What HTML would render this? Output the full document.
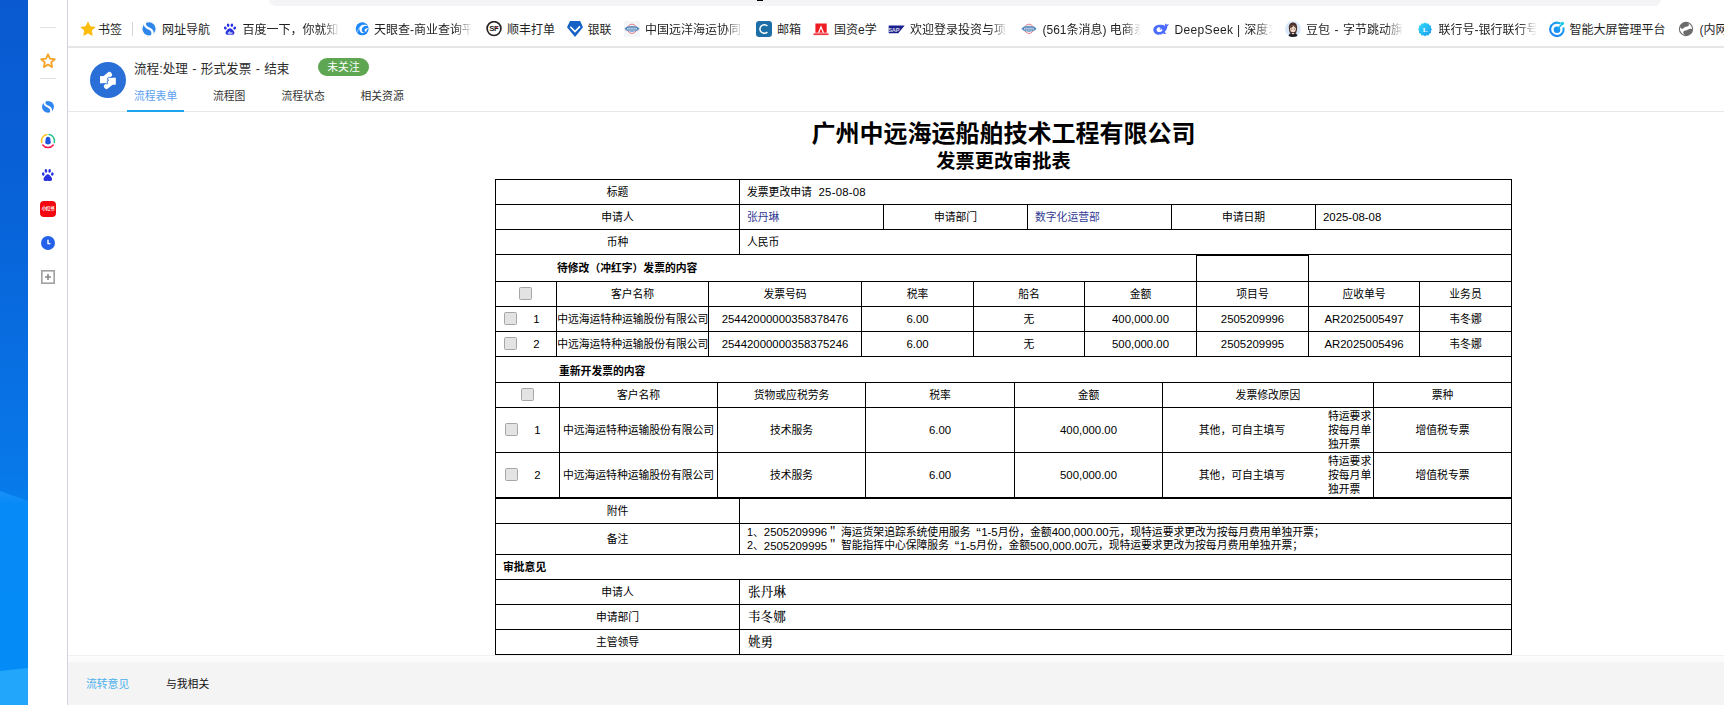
<!DOCTYPE html>
<html lang="zh-CN"><head><meta charset="utf-8"><title>流程:处理 - 形式发票 - 结束</title>
<style>
*{box-sizing:border-box;margin:0;padding:0}
html,body{width:1724px;height:705px;overflow:hidden;background:#fff}
body{position:relative;font-family:"Liberation Sans","Noto Sans CJK SC",sans-serif;color:#000;font-size:10.8px}
.abs{position:absolute}
.t{position:absolute;white-space:nowrap;line-height:1}
.c{position:absolute;padding-top:1.5px;display:flex;align-items:center;justify-content:center;white-space:nowrap;line-height:1}
.l{position:absolute;padding-top:1.5px;display:flex;align-items:center;justify-content:flex-start;white-space:nowrap;line-height:1}
.ln{position:absolute;background:#000}
.cb{position:absolute;width:13px;height:13px;border:1px solid #a6a6a6;border-radius:1.5px;background:#e3e3e3}
.bm{position:absolute;top:23px;height:15px;font-size:12px;line-height:15px;color:#1f1f1f;white-space:nowrap;overflow:hidden}
.bm.f{-webkit-mask-image:linear-gradient(90deg,#000 0,#000 82%,transparent 100%);mask-image:linear-gradient(90deg,#000 0,#000 82%,transparent 100%)}
.ic{position:absolute;top:21px;width:16px;height:16px}
.num{font-size:11.4px;position:relative;top:.4px}
.lnk{color:#333b94}
.b{font-weight:bold}
.q{margin-left:5.8px;margin-right:.4px;font-size:13.5px;line-height:0;position:relative;top:1px}
.sf{font-family:"Liberation Serif","Noto Serif CJK SC",serif;font-size:12.6px;font-weight:500}
</style></head>
<body>
<svg class="abs" id="desk" style="left:0;top:0" width="28" height="705" viewBox="0 0 28 705" preserveAspectRatio="none">
<defs><linearGradient id="dg" x1="0" y1="0" x2="0" y2="1"><stop offset="0" stop-color="#0a59d0"/><stop offset=".33" stop-color="#0864da"/><stop offset=".67" stop-color="#0878e8"/><stop offset=".72" stop-color="#067eec"/><stop offset="1" stop-color="#067eec"/></linearGradient>
<linearGradient id="dg2" x1="0" y1="0" x2="0" y2="1"><stop offset="0" stop-color="#1a92fa"/><stop offset=".06" stop-color="#068af7"/><stop offset="1" stop-color="#048cf6"/></linearGradient></defs>
<rect width="28" height="705" fill="url(#dg)"/>
<path d="M0 491L28 501V705H0z" fill="url(#dg2)"/>
<path d="M0 671L28 668V705H0z" fill="#22a6fc"/>
</svg>
<div class="abs" id="side" style="left:28px;top:0;width:40px;height:705px;background:#fff;border-right:1px solid #cfd2e3"></div>
<div class="abs" style="left:40px;top:27px;width:16px;height:1px;background:#e3e3e3"></div>
<div class="abs" style="left:40px;top:78px;width:16px;height:1px;background:#e3e3e3"></div>
<svg class="abs" style="left:39px;top:52px" width="18" height="17" viewBox="0 0 18 17"><path d="M9 2.300l2 4.300 4.700.6-3.500 3.200.9 4.600L9 12.700 4.900 15l.9-4.600L2.300 7.200 7 6.600z" fill="none" stroke="#f5a52b" stroke-width="1.900" stroke-linejoin="round"/></svg>
<svg class="abs" style="left:41px;top:99.500px" width="14" height="14" viewBox="0 0 16 16"><circle cx="8" cy="8" r="7.800" fill="#fff"/><circle cx="8" cy="7.800" r="6.800" fill="#2f86f0"/><path d="M4 1.800C2.900 5.300 5.800 6.500 8.400 7.700c2.600 1.200 3.800 3.100 2.900 6.300" fill="none" stroke="#fff" stroke-width="2.300" stroke-linecap="round"/></svg>
<svg class="abs" style="left:39px;top:132px" width="18" height="18" viewBox="-9 -9 18 18">
<path d="M1.100 -6.400A6.500 6.500 0 0 1 6.300 1.600" fill="none" stroke="#22c08a" stroke-width="1.500" stroke-linecap="round"/>
<path d="M5.200 4A6.500 6.500 0 0 1 -5.200 4" fill="none" stroke="#f2164c" stroke-width="1.500" stroke-linecap="round"/>
<path d="M-6.300 1.600A6.500 6.500 0 0 1 -1.100 -6.400" fill="none" stroke="#fcc419" stroke-width="1.500" stroke-linecap="round"/>
<path d="M0 -4.300c-1.500 0-2.400 1.200-2.400 2.700 0 .7-.1 1.400-.3 2.100-.3 1 .1 2.100.9 2.600.5.300 1.100.5 1.800.5s1.300-.2 1.800-.5c.8-.5 1.200-1.600.9-2.600-.2-.7-.3-1.400-.3-2.100C2.400 -3.100 1.500 -4.300 0 -4.300z" fill="#1d55e0"/></svg>
<svg class="abs" style="left:41.200px;top:167.800px" width="13.600" height="14" viewBox="0 0 20 19" fill="#2a32e0" preserveAspectRatio="none"><ellipse cx="3.300" cy="8.200" rx="1.900" ry="2.300" transform="rotate(-20 3.300 8.200)"/><ellipse cx="7.300" cy="4" rx="1.900" ry="2.500" transform="rotate(-6 7.300 4)"/><ellipse cx="12.700" cy="4" rx="1.900" ry="2.500" transform="rotate(6 12.700 4)"/><ellipse cx="16.700" cy="8.200" rx="1.900" ry="2.300" transform="rotate(20 16.700 8.200)"/><path d="M10 8.400c2.400 0 3.600 2.100 5.300 4 1.700 1.800 1.300 4.900-1.200 5.300-1.600.3-2.600-.4-4.100-.4s-2.500.7-4.100.4c-2.500-.4-2.900-3.500-1.200-5.300 1.700-1.900 2.900-4 5.300-4z"/></svg>
<div class="abs" style="left:40px;top:201px;width:16px;height:16px;border-radius:4px;background:#f5070f;color:#fff;font-size:4.600px;font-weight:bold;line-height:16.500px;text-align:center;letter-spacing:-.4px;overflow:hidden">小红书</div>
<svg class="abs" style="left:41px;top:236px" width="14" height="14" viewBox="0 0 16 16"><circle cx="8" cy="8" r="8" fill="#2460ea"/><path d="M8 4.400v4.300h2.800" fill="none" stroke="#fff" stroke-width="1.600"/></svg>
<svg class="abs" style="left:41px;top:270px" width="14" height="14" viewBox="0 0 14 14"><rect x=".8" y=".8" width="12.400" height="12.400" fill="#fff" stroke="#a0a0a0" stroke-width="1.600"/><path d="M7 4v6M4 7h6" stroke="#888" stroke-width="1.600"/></svg>
<div class="abs" style="left:268.500px;top:-10px;width:1392px;height:16.200px;background:#f4f4f7;border-radius:0 0 7px 7px"></div>
<div class="abs" style="left:757px;top:0;width:6px;height:1px;background:#000"></div>
<div class="abs" style="left:68px;top:46px;width:1656px;height:2px;background:#e6e6e6"></div>
<div class="abs" style="left:132px;top:22px;width:1px;height:14px;background:#d5d5d5"></div>
<svg class="ic" style="left:79.5px;top:21px;width:16px;height:16px" viewBox="0 0 16 16"><path d="M8 .3l2.400 4.900 5.400.7-4 3.700 1 5.400L8 12.400 3.200 15l1-5.400-4-3.700 5.400-.7z" fill="#fbbc0b"/></svg>
<div class="bm" style="left:98px;width:26px">书签</div>
<svg class="ic" style="left:141px;top:21px;width:16px;height:16px" viewBox="0 0 16 16"><circle cx="8" cy="8" r="7.700" fill="#fff" stroke="#ececec" stroke-width=".5"/><circle cx="8" cy="7.800" r="6.600" fill="#2f86ea"/><path d="M4 1.800C2.900 5.300 5.800 6.500 8.400 7.700c2.600 1.200 3.800 3.100 2.900 6.300" fill="none" stroke="#fff" stroke-width="2.300" stroke-linecap="round"/></svg>
<div class="bm" style="left:162px;width:50px">网址导航</div>
<svg class="ic" style="left:222.5px;top:21.5px;width:14px;height:14px" viewBox="0 0 20 19"><g fill="#2a32e0"><ellipse cx="3.300" cy="8.200" rx="1.900" ry="2.300" transform="rotate(-20 3.300 8.200)"/><ellipse cx="7.300" cy="4" rx="1.900" ry="2.500" transform="rotate(-6 7.300 4)"/><ellipse cx="12.700" cy="4" rx="1.900" ry="2.500" transform="rotate(6 12.700 4)"/><ellipse cx="16.700" cy="8.200" rx="1.900" ry="2.300" transform="rotate(20 16.700 8.200)"/><path d="M10 8.400c2.400 0 3.600 2.100 5.300 4 1.700 1.800 1.300 4.900-1.200 5.300-1.600.3-2.600-.4-4.100-.4s-2.500.7-4.100.4c-2.500-.4-2.900-3.500-1.200-5.300 1.700-1.900 2.900-4 5.300-4z"/></g><text x="10" y="16.200" font-size="5.500" font-weight="bold" text-anchor="middle" fill="#fff" font-family="Liberation Sans,sans-serif">du</text></svg>
<div class="bm f" style="left:242.5px;width:97px">百度一下，你就知道</div>
<svg class="ic" style="left:354px;top:21px;width:16px;height:16px" viewBox="0 0 16 16"><rect x=".2" y=".2" width="15.600" height="15.600" fill="#fff" stroke="#eef0f3" stroke-width=".4"/><circle cx="8.200" cy="7.800" r="6.500" fill="#1a86f8"/><path d="M14.900 5.300C12 4 8.300 5.200 7.800 8.200c-.3 2 1 3.500 3 3.600-2.300 1.200-5.300-.3-5.400-3.300-.1-3.300 3.500-5.600 7.200-4.500z" fill="#fff"/><path d="M14.800 7.600c-1.900-.7-4 .2-4.200 1.700-.1 1 .7 1.600 1.700 1.400-.1-1.300 1-2.600 2.500-3.100z" fill="#fff"/><path d="M3.300 11.500C4 8 5.500 5.400 8.500 3.800" fill="none" stroke="#fff" stroke-width=".5"/></svg>
<div class="bm f" style="left:374px;width:98px">天眼查-商业查询平台</div>
<svg class="ic" style="left:486px;top:21px;width:16px;height:16px" viewBox="0 0 16 16"><circle cx="8" cy="7.600" r="6.900" fill="#fff" stroke="#2a2425" stroke-width="1.700"/><text x="7.800" y="10.300" font-size="7.800" font-weight="bold" text-anchor="middle" fill="#2a2425" font-family="Liberation Sans,sans-serif" letter-spacing="-.5">SF</text><circle cx="10.800" cy="6.600" r=".8" fill="#e8232d"/></svg>
<div class="bm" style="left:507px;width:50px">顺丰打单</div>
<svg class="ic" style="left:567px;top:21px;width:16px;height:16px" viewBox="0 0 16 16"><path d="M3 0h10.200L16 6.300 8 16 0 6.300z" fill="#1661c5"/><path d="M3.300 5.700l4.700 4.900 5-5.200" fill="none" stroke="#fff" stroke-width="1.600"/></svg>
<div class="bm" style="left:587.5px;width:26px">银联</div>
<svg class="ic" style="left:624px;top:21px;width:16px;height:16px" viewBox="0 0 16 16"><rect width="16" height="16" rx="1.500" fill="#f3f5f6"/><circle cx="8" cy="7.800" r="4.600" fill="#fff" stroke="#e25a6c" stroke-width=".8"/><path d="M.5 7.800C2 5.600 5 4.800 8 4.800s6 .8 7.500 3c-1.500 2.200-4.500 3-7.500 3s-6-.8-7.500-3z" fill="#5a8abb"/><path d="M3 7.800h10" stroke="#e6eef6" stroke-width="1.300" stroke-dasharray="1.500 .6"/><path d="M4.200 6.100h7.600M4.200 9.500h7.600" stroke="#a9c3dd" stroke-width=".6"/></svg>
<div class="bm f" style="left:645px;width:98px">中国远洋海运协同办公</div>
<svg class="ic" style="left:756px;top:21px;width:16px;height:16px" viewBox="0 0 16 16"><rect width="16" height="16" rx="3.200" fill="#1c6fa6"/><path d="M11.400 5.100A4.300 4.300 0 1 0 11.400 10.900" fill="none" stroke="#fff" stroke-width="1.500"/></svg>
<div class="bm" style="left:777px;width:26px">邮箱</div>
<svg class="ic" style="left:813px;top:21px;width:16px;height:16px" viewBox="0 0 16 16"><rect x="2.400" y="2.500" width="11.300" height="9.200" fill="#ee1c23"/><path d="M8 4.300L4.900 11.700h1.400L8 7.500l1.700 4.200h1.400z" fill="#fff"/><rect x=".5" y="12.300" width="15" height="1.800" fill="#ee3a40"/></svg>
<div class="bm" style="left:834px;width:44px">国资e学</div>
<svg class="ic" style="left:888px;top:21px;width:17px;height:17px" viewBox="0 0 17 16"><path d="M.7 4h16L10.200 11.800H.7z" fill="#1b1f8f"/><text x="5.800" y="10.300" font-size="5.800" font-weight="bold" text-anchor="middle" fill="#d8dbe6" font-family="Liberation Sans,sans-serif" letter-spacing="-.3">SAP</text></svg>
<div class="bm f" style="left:910px;width:98px">欢迎登录投资与项目</div>
<svg class="ic" style="left:1020.5px;top:21px;width:16px;height:16px" viewBox="0 0 16 16"><circle cx="8" cy="7.800" r="4.600" fill="#fff" stroke="#e25a6c" stroke-width=".8"/><path d="M.5 7.800C2 5.600 5 4.800 8 4.800s6 .8 7.500 3c-1.500 2.200-4.500 3-7.500 3s-6-.8-7.500-3z" fill="#5a8abb"/><path d="M3 7.800h10" stroke="#e6eef6" stroke-width="1.300" stroke-dasharray="1.500 .6"/><path d="M4.200 6.100h7.600M4.200 9.500h7.600" stroke="#a9c3dd" stroke-width=".6"/></svg>
<div class="bm f" style="left:1042.5px;width:98px">(561条消息) 电商系统</div>
<svg class="ic" style="left:1153px;top:21px;width:16px;height:16px" viewBox="0 0 16 16"><path d="M15.800 3c-.8.400-1.300.1-2 .7-.5-1-1.100-.9-1.800-1.300.2 1-.2 1.500.3 2.300-1.600-.6-3.500-1.300-6.200-1C2.700 4.100.200 6.100.300 8.900c.2 3.100 3 5 6.400 4.700 1.600-.1 2.700-.7 3.500-1.400.8.700 1.900 1 3.200.8-.9-.6-1.400-1.300-1.600-2.300 1.700-1.600 2.600-4.100 2.500-5.500.8-.4 1.200-1.200 1.500-2.200zM4.300 10.400C3 9 3.400 6.900 5.100 6.400c1.800-.5 3.400.9 4.500 3.100-1.800 1.600-4 2.200-5.300.9z" fill="#4d6bfe"/><circle cx="7.400" cy="8" r=".7" fill="#4d6bfe"/></svg>
<div class="bm f" style="left:1174.5px;width:98px"><span style="letter-spacing:.35px">DeepSeek | </span>深度求索</div>
<svg class="ic" style="left:1285px;top:21px;width:16px;height:16px" viewBox="0 0 16 16"><circle cx="8" cy="8" r="7.900" fill="#d7e8fb"/><path d="M3.600 15c.3-2.300 2-3.300 4.400-3.300s4.100 1 4.400 3.300c-1.200.7-2.700 1-4.400 1s-3.200-.3-4.400-1z" fill="#1d1c22"/><path d="M6.800 10.500h2.400v2.200L8 13.500l-1.200-.8z" fill="#f3d2c0"/><path d="M3.900 7.400C3.600 3.600 5.500 1.500 8 1.500s4.400 2.100 4.100 5.900c-.1 1.900-.5 3.500-1.100 4.500H5c-.6-1-1-2.600-1.100-4.500z" fill="#4a3028"/><ellipse cx="8" cy="7.700" rx="2.900" ry="3.500" fill="#f7dccd"/><path d="M5 7C5.500 4.500 7.500 4 8.800 4.200 10 4.500 11 5.500 11.100 7 10 6.500 9 5.500 8.600 4.800 8 5.800 6.500 6.800 5 7z" fill="#4a3028"/><circle cx="6.800" cy="8" r=".5" fill="#222"/><circle cx="9.300" cy="8" r=".5" fill="#222"/></svg>
<div class="bm f" style="left:1306px;width:97px"><span style="word-spacing:1.2px">豆包 - 字节跳动旗下</span></div>
<svg class="ic" style="left:1417px;top:21px;width:16px;height:16px" viewBox="0 0 16 16"><defs><linearGradient id="lh" x1="0" y1="0" x2="1" y2="1"><stop offset="0" stop-color="#33dcf6"/><stop offset="1" stop-color="#1b9cf0"/></linearGradient></defs><path d="M8 1.500l1.600 1 1.900-.1.800 1.700 1.700.8-.1 1.900 1 1.600-1 1.600.1 1.900-1.700.8-.8 1.700-1.900-.1-1.600 1-1.600-1-1.900.1-.8-1.700-1.700-.8.100-1.900-1-1.600 1-1.600-.1-1.900 1.700-.8.800-1.700 1.900.1z" fill="url(#lh)"/><text x="8.200" y="11" font-size="7" font-weight="bold" text-anchor="middle" fill="#fff" font-family="Liberation Serif,serif">L</text></svg>
<div class="bm f" style="left:1438.5px;width:98px">联行号-银行联行号</div>
<svg class="ic" style="left:1548.5px;top:21px;width:16px;height:16px" viewBox="0 0 16 16"><defs><linearGradient id="zn" x1="0" y1="1" x2="1" y2="0"><stop offset="0" stop-color="#1b82f5"/><stop offset=".7" stop-color="#1d9af3"/><stop offset="1" stop-color="#1fd0de"/></linearGradient></defs><path d="M10.600 2.200A6.700 6.700 0 1 0 14.500 7.200" fill="none" stroke="url(#zn)" stroke-width="2.100" stroke-linecap="round"/><circle cx="8" cy="8.800" r="3.300" fill="#1c92f4"/><path d="M8.500 8.300L13 3" stroke="#1fb4ea" stroke-width="1.600"/><circle cx="13.300" cy="2.500" r="1.800" fill="#1fcbe0"/></svg>
<div class="bm" style="left:1569.5px;width:98px">智能大屏管理平台</div>
<svg class="ic" style="left:1678px;top:21px;width:16px;height:16px" viewBox="0 0 16 16"><circle cx="8" cy="8" r="6.600" fill="#fff" stroke="#6b6b6b" stroke-width="1.100"/><path d="M2.300 4.500C3.800 2.300 6.300 1.300 9 1.800c1.600.7 2.300 1.700 1.700 2.900-.5 1-2.600.8-3.700 1.300-1.200.5-1.300 1.500-2.700 1.700-1.300.2-2.300-.8-2-3.200z" fill="#6b6b6b"/><path d="M14.500 8.600c-.3 3.300-3 5.800-6.300 5.900-1.800-.7-2.800-1.600-3-2.800-.2-1.300.9-2.200 2.400-2.300 1.700-.1 2.500-1.300 4-1.500 1.200-.2 2.200 0 2.900.7z" fill="#6b6b6b"/></svg>
<div class="bm" style="left:1699.5px;width:40px">(内网</div>
<div class="abs" style="left:68px;top:111px;width:1656px;height:1px;background:#e8e8e8"></div>
<svg class="abs" style="left:90px;top:62px" width="36" height="36" viewBox="-18 -18 36 36">
<circle r="18" fill="#2a6fd8"/>
<g fill="#fff" stroke="#fff" stroke-linecap="round">
<path d="M-3.400 -1.300L1.300 -5.300" stroke-width="5.400" fill="none"/>
<rect x="-8" y="-3.900" width="7.600" height="7.200" stroke="none"/>
<path d="M3.400 2.300L-1.400 6.300" stroke-width="5.400" fill="none"/>
<rect x=".4" y="-2.300" width="7.400" height="7" stroke="none"/>
</g>
<path d="M4.600 -2.700H.300L-.6 -.9.200 .3-.8 1.700-.3 3.700H-4.600" fill="none" stroke="#2a6fd8" stroke-width=".8"/>
</svg>
<div class="t" style="left:134px;top:62px;font-size:12.600px;word-spacing:.9px;color:#2b2b2b;line-height:14px">流程:处理 - 形式发票 - 结束</div>
<div class="c" style="padding-top:0;left:318px;top:58px;width:51px;height:18px;border-radius:9px;background:#5ea652;color:#fff;font-size:10.800px">未关注</div>
<div class="t" style="left:134px;top:90.700px;font-size:10.800px;color:#5a9ff0">流程表单</div>
<div class="t" style="left:213px;top:90.700px;font-size:10.800px;color:#333">流程图</div>
<div class="t" style="left:281.500px;top:90.700px;font-size:10.800px;color:#333">流程状态</div>
<div class="t" style="left:360.500px;top:90.700px;font-size:10.800px;color:#333">相关资源</div>
<div class="abs" style="left:127px;top:110px;width:57px;height:2px;background:#1ba6ee"></div>
<div class="c b" style="padding-top:0;left:495px;top:120px;width:1017px;height:28px;font-size:24px">广州中远海运船舶技术工程有限公司</div>
<div class="c b" style="padding-top:0;left:495px;top:150px;width:1017px;height:24px;font-size:19.200px">发票更改审批表</div>
<div class="ln" style="left:495px;top:179px;width:1017px;height:1px"></div>
<div class="ln" style="left:495px;top:204px;width:1017px;height:1px"></div>
<div class="ln" style="left:495px;top:229px;width:1017px;height:1px"></div>
<div class="ln" style="left:495px;top:254px;width:1017px;height:1px"></div>
<div class="ln" style="left:495px;top:281px;width:1017px;height:1px"></div>
<div class="ln" style="left:495px;top:306px;width:1017px;height:1px"></div>
<div class="ln" style="left:495px;top:331px;width:1017px;height:1px"></div>
<div class="ln" style="left:495px;top:356px;width:1017px;height:1px"></div>
<div class="ln" style="left:495px;top:382px;width:1017px;height:1px"></div>
<div class="ln" style="left:495px;top:407px;width:1017px;height:1px"></div>
<div class="ln" style="left:495px;top:452px;width:1017px;height:1px"></div>
<div class="ln" style="left:495px;top:523px;width:1017px;height:1px"></div>
<div class="ln" style="left:495px;top:554px;width:1017px;height:1px"></div>
<div class="ln" style="left:495px;top:579px;width:1017px;height:1px"></div>
<div class="ln" style="left:495px;top:604px;width:1017px;height:1px"></div>
<div class="ln" style="left:495px;top:629px;width:1017px;height:1px"></div>
<div class="ln" style="left:495px;top:654px;width:1017px;height:1px"></div>
<div class="ln" style="left:495px;top:497px;width:1017px;height:2px"></div>
<div class="ln" style="left:1196px;top:255px;width:113px;height:1px"></div>
<div class="ln" style="left:495px;top:179px;width:1px;height:476px"></div>
<div class="ln" style="left:1511px;top:179px;width:1px;height:476px"></div>
<div class="ln" style="left:739px;top:179px;width:1px;height:75px"></div>
<div class="ln" style="left:739px;top:498px;width:1px;height:56px"></div>
<div class="ln" style="left:739px;top:579px;width:1px;height:75px"></div>
<div class="ln" style="left:883px;top:204px;width:1px;height:25px"></div>
<div class="ln" style="left:1027px;top:204px;width:1px;height:25px"></div>
<div class="ln" style="left:1171px;top:204px;width:1px;height:25px"></div>
<div class="ln" style="left:1315px;top:204px;width:1px;height:25px"></div>
<div class="ln" style="left:1196px;top:254px;width:1px;height:27px"></div>
<div class="ln" style="left:1308px;top:254px;width:1px;height:27px"></div>
<div class="ln" style="left:556px;top:281px;width:1px;height:75px"></div>
<div class="ln" style="left:708px;top:281px;width:1px;height:75px"></div>
<div class="ln" style="left:861px;top:281px;width:1px;height:75px"></div>
<div class="ln" style="left:973px;top:281px;width:1px;height:75px"></div>
<div class="ln" style="left:1084px;top:281px;width:1px;height:75px"></div>
<div class="ln" style="left:1196px;top:281px;width:1px;height:75px"></div>
<div class="ln" style="left:1308px;top:281px;width:1px;height:75px"></div>
<div class="ln" style="left:1419px;top:281px;width:1px;height:75px"></div>
<div class="ln" style="left:559px;top:382px;width:1px;height:115px"></div>
<div class="ln" style="left:717px;top:382px;width:1px;height:115px"></div>
<div class="ln" style="left:865px;top:382px;width:1px;height:115px"></div>
<div class="ln" style="left:1014px;top:382px;width:1px;height:115px"></div>
<div class="ln" style="left:1162px;top:382px;width:1px;height:115px"></div>
<div class="ln" style="left:1373px;top:382px;width:1px;height:115px"></div>
<div class="c " style="left:495px;top:180px;width:245px;height:24px;">标题</div>
<div class="l " style="left:747px;top:180px;height:24px;">发票更改申请&nbsp;&nbsp;<span style="letter-spacing:.2px;margin-left:.8px"><span class="num">25-08-08</span></span></div>
<div class="c " style="left:495px;top:205px;width:245px;height:24px;">申请人</div>
<div class="l lnk" style="left:747px;top:205px;height:24px;">张丹琳</div>
<div class="c " style="left:883px;top:205px;width:145px;height:24px;">申请部门</div>
<div class="l lnk" style="left:1035px;top:205px;height:24px;">数字化运营部</div>
<div class="c " style="left:1171px;top:205px;width:145px;height:24px;">申请日期</div>
<div class="l " style="left:1323px;top:205px;height:24px;"><span class="num">2025-08-08</span></div>
<div class="c " style="left:495px;top:230px;width:245px;height:24px;">币种</div>
<div class="l " style="left:747px;top:230px;height:24px;">人民币</div>
<div class="l b" style="left:557px;top:255px;height:26px;">待修改（冲红字）发票的内容</div>
<div class="cb" style="left:519px;top:287px"></div>
<div class="c " style="left:556px;top:282px;width:153px;height:24px;">客户名称</div>
<div class="c " style="left:708px;top:282px;width:154px;height:24px;">发票号码</div>
<div class="c " style="left:861px;top:282px;width:113px;height:24px;">税率</div>
<div class="c " style="left:973px;top:282px;width:112px;height:24px;">船名</div>
<div class="c " style="left:1084px;top:282px;width:113px;height:24px;">金额</div>
<div class="c " style="left:1196px;top:282px;width:113px;height:24px;">项目号</div>
<div class="c " style="left:1308px;top:282px;width:112px;height:24px;">应收单号</div>
<div class="c " style="left:1419px;top:282px;width:93px;height:24px;">业务员</div>
<div class="cb" style="left:504px;top:312px"></div>
<div class="c " style="left:530px;top:307px;width:13px;height:24px;"><span class="num">1</span></div>
<div class="l " style="left:557.2px;top:307px;height:24px;">中远海运特种运输股份有限公司</div>
<div class="c " style="left:708px;top:307px;width:154px;height:24px;"><span class="num">25442000000358378476</span></div>
<div class="c " style="left:861px;top:307px;width:113px;height:24px;"><span class="num">6.00</span></div>
<div class="c " style="left:973px;top:307px;width:112px;height:24px;">无</div>
<div class="c " style="left:1084px;top:307px;width:113px;height:24px;"><span class="num">400,000.00</span></div>
<div class="c " style="left:1196px;top:307px;width:113px;height:24px;"><span class="num">2505209996</span></div>
<div class="c " style="left:1308px;top:307px;width:112px;height:24px;"><span class="num">AR2025005497</span></div>
<div class="c " style="left:1419px;top:307px;width:93px;height:24px;">韦冬娜</div>
<div class="cb" style="left:504px;top:337px"></div>
<div class="c " style="left:530px;top:332px;width:13px;height:24px;"><span class="num">2</span></div>
<div class="l " style="left:557.2px;top:332px;height:24px;">中远海运特种运输股份有限公司</div>
<div class="c " style="left:708px;top:332px;width:154px;height:24px;"><span class="num">25442000000358375246</span></div>
<div class="c " style="left:861px;top:332px;width:113px;height:24px;"><span class="num">6.00</span></div>
<div class="c " style="left:973px;top:332px;width:112px;height:24px;">无</div>
<div class="c " style="left:1084px;top:332px;width:113px;height:24px;"><span class="num">500,000.00</span></div>
<div class="c " style="left:1196px;top:332px;width:113px;height:24px;"><span class="num">2505209995</span></div>
<div class="c " style="left:1308px;top:332px;width:112px;height:24px;"><span class="num">AR2025005496</span></div>
<div class="c " style="left:1419px;top:332px;width:93px;height:24px;">韦冬娜</div>
<div class="l b" style="left:559px;top:358px;height:24.5px;">重新开发票的内容</div>
<div class="cb" style="left:521px;top:388px"></div>
<div class="c " style="left:559px;top:383px;width:159px;height:24px;">客户名称</div>
<div class="c " style="left:717px;top:383px;width:149px;height:24px;">货物或应税劳务</div>
<div class="c " style="left:865px;top:383px;width:150px;height:24px;">税率</div>
<div class="c " style="left:1014px;top:383px;width:149px;height:24px;">金额</div>
<div class="c " style="left:1162px;top:383px;width:212px;height:24px;">发票修改原因</div>
<div class="c " style="left:1373px;top:383px;width:139px;height:24px;">票种</div>
<div class="cb" style="left:505px;top:423px"></div>
<div class="c " style="left:531px;top:408px;width:13px;height:44px;"><span class="num">1</span></div>
<div class="c " style="left:559px;top:408px;width:159px;height:44px;">中远海运特种运输股份有限公司</div>
<div class="c " style="left:717px;top:408px;width:149px;height:44px;">技术服务</div>
<div class="c " style="left:865px;top:408px;width:150px;height:44px;"><span class="num">6.00</span></div>
<div class="c " style="left:1014px;top:408px;width:149px;height:44px;"><span class="num">400,000.00</span></div>
<div class="c " style="left:1162px;top:408px;width:160px;height:44px;">其他，可自主填写</div>
<div class="abs" style="left:1328px;top:410px;width:46px;height:43px;font-size:10.800px;line-height:13.800px;white-space:normal;word-break:break-all">特运要求按每月单独开票</div>
<div class="c " style="left:1373px;top:408px;width:139px;height:44px;">增值税专票</div>
<div class="cb" style="left:505px;top:468px"></div>
<div class="c " style="left:531px;top:453px;width:13px;height:44px;"><span class="num">2</span></div>
<div class="c " style="left:559px;top:453px;width:159px;height:44px;">中远海运特种运输股份有限公司</div>
<div class="c " style="left:717px;top:453px;width:149px;height:44px;">技术服务</div>
<div class="c " style="left:865px;top:453px;width:150px;height:44px;"><span class="num">6.00</span></div>
<div class="c " style="left:1014px;top:453px;width:149px;height:44px;"><span class="num">500,000.00</span></div>
<div class="c " style="left:1162px;top:453px;width:160px;height:44px;">其他，可自主填写</div>
<div class="abs" style="left:1328px;top:455px;width:46px;height:43px;font-size:10.800px;line-height:13.800px;white-space:normal;word-break:break-all">特运要求按每月单独开票</div>
<div class="c " style="left:1373px;top:453px;width:139px;height:44px;">增值税专票</div>
<div class="c " style="left:495px;top:499px;width:245px;height:24px;">附件</div>
<div class="c " style="left:495px;top:524px;width:245px;height:30px;">备注</div>
<div class="abs" style="left:747px;top:525.500px;font-size:10.800px;line-height:13.800px;white-space:nowrap">1、<span class="num">2505209996</span>＂ 海运货架追踪系统使用服务<span class="q">“</span><span class="num">1-5</span>月份，金额<span class="num">400,000.00</span>元，现特运要求更改为按每月费用单独开票；<br>2、<span class="num">2505209995</span>＂ 智能指挥中心保障服务<span class="q">“</span><span class="num">1-5</span>月份，金额<span class="num">500,000.00</span>元，现特运要求更改为按每月费用单独开票；</div>
<div class="l b" style="left:503px;top:555px;height:24px;">审批意见</div>
<div class="c " style="left:495px;top:580px;width:245px;height:24px;">申请人</div>
<div class="l sf" style="left:748px;top:580px;height:24px;">张丹琳</div>
<div class="c " style="left:495px;top:605px;width:245px;height:24px;">申请部门</div>
<div class="l sf" style="left:748px;top:605px;height:24px;">韦冬娜</div>
<div class="c " style="left:495px;top:630px;width:245px;height:24px;">主管领导</div>
<div class="l sf" style="left:748px;top:630px;height:24px;">姚勇</div>
<div class="abs" style="left:68px;top:655px;width:1656px;height:50px;background:linear-gradient(180deg,#f1f1f1 0,#f1f1f1 1px,#fdfdfd 1px,#fafafa 7px,#f6f6f6 8px,#f2f2f2 9px,#f4f4f4 9.500px,#f4f4f4 100%)"></div>
<div class="t" style="left:86px;top:679px;font-size:10.800px;color:#4ab1ee">流转意见</div>
<div class="t" style="left:166px;top:679px;font-size:10.800px;color:#111">与我相关</div>
</body></html>
